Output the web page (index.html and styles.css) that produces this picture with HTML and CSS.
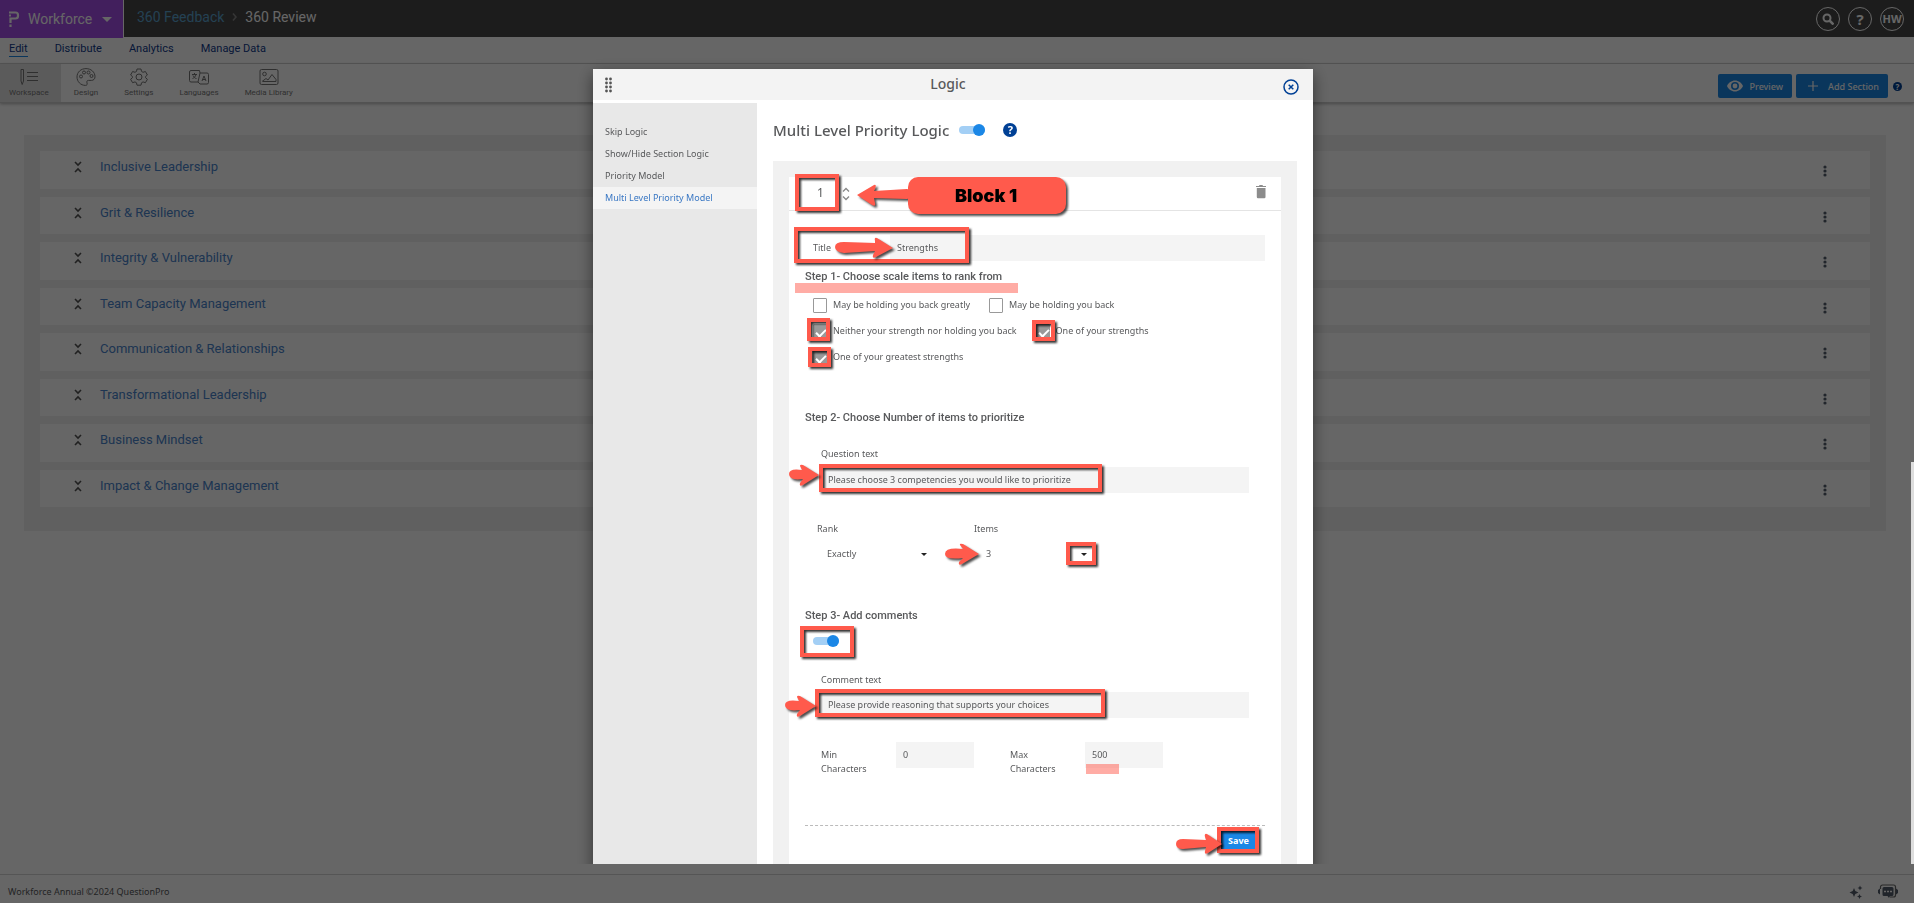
FILE: index.html
```html
<!DOCTYPE html>
<html lang="en">
<head>
  <meta charset="UTF-8">
  <meta name="viewport" content="width=device-width, initial-scale=1.0">
  <title>360 Review</title>
  <link rel="stylesheet" href="styles.css">
</head>
<body>
  <div class="page">
    <header class="topbar">
      <button class="product">
        <svg width="12" height="17" viewBox="0 0 12 17"><path d="M1 1.500h6.500a2.500 2.500 0 0 1 2.500 2.500v1a2.500 2.500 0 0 1-2.500 2.500H2.500V12M2.500 13.500v2.500M1 4.500h2" fill="none" stroke="#fff" stroke-width="2.200"/></svg>
        <span>Workforce</span>
        <span class="caret"></span>
      </button>
      <nav class="crumbs">
        <a href="#">360 Feedback</a>
        <svg width="5" height="8" viewBox="0 0 5 8"><path d="M1 0.500l3 3.500-3 3.500" fill="none" stroke="#888" stroke-width="1.500"/></svg>
        <span>360 Review</span>
      </nav>
      <div class="top-icons">
        <button aria-label="Search"><svg width="12" height="12" viewBox="0 0 12 12"><circle cx="5" cy="5" r="3.500" fill="none" stroke="#fff" stroke-width="2"/><path d="M7.500 7.500l4 4" stroke="#fff" stroke-width="2.500"/></svg></button>
        <button class="mark">?</button>
        <button>HW</button>
      </div>
    </header>

    <nav class="tabs">
      <a class="current" href="#">Edit</a>
      <a href="#">Distribute</a>
      <a href="#">Analytics</a>
      <a href="#">Manage Data</a>
    </nav>

    <div class="toolbar">
      <a class="tool active" href="#">
        <svg width="20" height="18" viewBox="0 0 20 18"><path d="M2 1.500h2.500V13L3.200 16.500 2 13zM8 4.500h11M8 8.500h11M8 12.500h11"/></svg>
        Workspace
      </a>
      <a class="tool" href="#">
        <svg width="20" height="18" viewBox="0 0 20 18"><path d="M10 .6C5 .6 1 4 1 9c0 4.500 3.500 8.400 8.500 8.400 1.500 0 2-1 1.500-2.500s0-2.500 1.500-2.500h3c2 0 3.500-1.500 3.500-3.600C19 4 15 .6 10 .6z"/><circle cx="5" cy="8.500" r="1.500"/><circle cx="8" cy="4.500" r="1.500"/><circle cx="12.500" cy="4.500" r="1.500"/><circle cx="15.500" cy="8" r="1.500"/></svg>
        Design
      </a>
      <a class="tool" href="#">
        <svg width="20" height="18" viewBox="0 0 20 18"><path d="M8 1h4l.5 2.400 1.500.9 2.400-.8 2 3.500-1.900 1.600v1l1.900 1.700-2 3.400-2.400-.8-1.500.9L12 17.200H8l-.5-2.400-1.500-.9-2.400.8-2-3.400 1.900-1.700v-1L1.600 7l2-3.500 2.400.8 1.500-.9z"/><circle cx="10" cy="9" r="3"/></svg>
        Settings
      </a>
      <a class="tool" href="#">
        <svg width="20" height="18" viewBox="0 0 20 18"><path d="M9 14H2a1.500 1.500 0 0 1-1.500-1.500V4A1.500 1.500 0 0 1 2 2.500h8.500L11 5M9 14l2 2h7a1.500 1.500 0 0 0 1.500-1.500V6.500A1.500 1.500 0 0 0 18 5h-7L9 14M3 6.500h5M5.500 5v1.500M7 6.500c-.5 2-2 3.500-3.500 4M4 7.500c.5 1.500 2 3 3.500 3M13 13l2-5 2 5M13.600 11.500h2.800"/></svg>
        Languages
      </a>
      <a class="tool" href="#">
        <svg width="20" height="18" viewBox="0 0 20 18"><rect x="1" y="1.500" width="18" height="15" rx="1.500"/><circle cx="5.500" cy="6" r="1.800"/><path d="M3 13.500l4-3 2 1.500 4-5.500 4 5v2H4"/></svg>
        Media Library
      </a>
      <div class="tool-actions">
        <button class="btn">
          <svg width="16" height="12" viewBox="0 0 16 12"><path fill-rule="evenodd" d="M8 .5C4.500.5 1.500 2.800 0 6c1.500 3.200 4.500 5.500 8 5.500s6.500-2.300 8-5.500C14.500 2.800 11.500.5 8 .5zM8 10a4 4 0 1 1 0-8 4 4 0 0 1 0 8zm0-6.400a2.400 2.400 0 1 0 0 4.800 2.400 2.400 0 0 0 0-4.800z" fill="#fff"/></svg>
          Preview
        </button>
        <button class="btn add">
          <svg width="12" height="12" viewBox="0 0 12 12"><path d="M6 1v10M1 6h10" stroke="#fff" stroke-width="1.200"/></svg>
          Add Section
        </button>
        <button class="help small" aria-label="Help">?</button>
      </div>
    </div>

    <main>
      <ul class="sections" id="sections"></ul>
    </main>

    <footer>
      <span>Workforce Annual ©2024 QuestionPro</span>
      <div class="footer-icons">
        <svg width="14" height="14" viewBox="0 0 14 14"><path d="M5 3l1.300 3L9.500 7.500 6.300 9 5 12 3.700 9 .5 7.500 3.700 6zM11 .5l.8 1.700 1.700.8-1.700.8L11 5.500l-.8-1.700L8.500 3l1.700-.8zM10.500 9l.8 1.700 1.700.8-1.700.8-.8 1.700-.8-1.700-1.700-.8 1.700-.8z"/></svg>
        <svg width="20" height="15" viewBox="0 0 20 15"><path d="M2.500 5V3a2 2 0 0 1 2-2h11a2 2 0 0 1 2 2v8a2 2 0 0 1-2 2H12" fill="none" stroke="#666" stroke-width="1.200"/><path d="M0 6l2-1.500v6L0 9zM20 6l-2-1.500v6L20 9zM6 3h8a1.500 1.500 0 0 1 1.500 1.500v6A1.500 1.500 0 0 1 14 12h-2l-1 2-1.500-2H6a1.500 1.500 0 0 1-1.500-1.500v-6A1.500 1.500 0 0 1 6 3z"/><path d="M6 7.500h2M9 7.500h2M12 7.500h2" stroke="#fff" stroke-width="1.500"/></svg>
      </div>
    </footer>
  </div>

  <div class="backdrop"></div>

  <div class="modal-wrap">
    <div class="modal" role="dialog" aria-label="Logic">
      <div class="modal-head">
        <svg width="8" height="16" viewBox="0 0 8 16" fill="#545454"><circle cx="1.500" cy="2" r="1.400"/><circle cx="5.500" cy="2" r="1.400"/><circle cx="1.500" cy="6" r="1.400"/><circle cx="5.500" cy="6" r="1.400"/><circle cx="1.500" cy="10" r="1.400"/><circle cx="5.500" cy="10" r="1.400"/><circle cx="1.500" cy="14" r="1.400"/><circle cx="5.500" cy="14" r="1.400"/></svg>
        <h2>Logic</h2>
        <button class="close" aria-label="Close">
          <svg width="16" height="16" viewBox="0 0 16 16" fill="none" stroke="#004095"><circle cx="8" cy="8" r="7" stroke-width="1.500"/><path d="M5.700 5.700l4.600 4.600M10.300 5.700l-4.600 4.600" stroke-width="1.500"/></svg>
        </button>
      </div>

      <div class="modal-body">
        <nav class="side">
          <a href="#">Skip Logic</a>
          <a href="#">Show/Hide Section Logic</a>
          <a href="#">Priority Model</a>
          <a class="active" href="#">Multi Level Priority Model</a>
        </nav>

        <div class="content">
          <div class="content-title">
            <h1>Multi Level Priority Logic</h1>
            <input type="checkbox" class="toggle" aria-label="Multi Level Priority Logic" checked>
            <button class="help" aria-label="Help">?</button>
          </div>

          <div class="panel">
            <div class="card">
              <div class="card-head">
                <span class="num">1</span>
                <svg width="8" height="14" viewBox="0 0 8 14" fill="none" stroke="#888" stroke-width="1.300"><path d="M1 4.500l3-3 3 3M1 9.500l3 3 3-3"/></svg>
                <button class="trash" aria-label="Delete">
                  <svg width="10" height="14" viewBox="0 0 10 14" fill="#8c8c8c"><path d="M0 1h3l.5-1h3L7 1h3v1H0zM.8 3h8.700v9a1.200 1.200 0 0 1-1.200 1.200H2A1.200 1.200 0 0 1 .8 12z"/></svg>
                </button>
              </div>

              <form class="card-body">
                <div class="title-row">
                  <label for="title">Title</label>
                  <input type="text" id="title" value="Strengths">
                </div>

                <h3>Step 1- Choose scale items to rank from</h3>
                <div class="scale">
                  <label><input type="checkbox">May be holding you back greatly</label>
                  <label><input type="checkbox">May be holding you back</label>
                  <label><input type="checkbox" checked>Neither your strength nor holding you back</label>
                  <label><input type="checkbox" checked>One of your strengths</label>
                  <label><input type="checkbox" checked>One of your greatest strengths</label>
                </div>

                <h3 class="step">Step 2- Choose Number of items to prioritize</h3>
                <div class="field">
                  <label for="question">Question text</label>
                  <input type="text" id="question" value="Please choose 3 competencies you would like to prioritize">
                </div>
                <div class="selects">
                  <div class="select-field">
                    <label for="rank">Rank</label>
                    <div class="select"><select id="rank"><option>Exactly</option></select></div>
                  </div>
                  <div class="select-field items">
                    <label for="items">Items</label>
                    <div class="select"><select id="items"><option>3</option></select></div>
                  </div>
                </div>

                <h3 class="step">Step 3- Add comments</h3>
                <input type="checkbox" class="toggle comments" aria-label="Add comments" checked>
                <div class="field comment">
                  <label for="comment">Comment text</label>
                  <input type="text" id="comment" value="Please provide reasoning that supports your choices">
                </div>
                <div class="limits">
                  <label for="min">Min Characters</label>
                  <input type="text" id="min" value="0">
                  <label for="max">Max Characters</label>
                  <input type="text" id="max" value="500">
                </div>

                <div class="actions">
                  <button type="button" class="save">Save</button>
                </div>
              </form>
            </div>
          </div>
        </div>
      </div>

      <!-- callouts drawn over the form -->
      <svg class="notes" width="720" height="795" viewBox="0 0 720 795">
        <g class="marker">
          <rect x="202" y="214" width="223" height="10"/>
          <rect x="493" y="695" width="33" height="10"/>
        </g>
        <g class="frames">
          <rect x="204" y="107" width="40" height="33"/>
          <rect x="203" y="160" width="171" height="32"/>
          <rect x="216" y="251" width="19" height="19"/>
          <rect x="441" y="253" width="19" height="17"/>
          <rect x="217" y="280" width="19" height="16"/>
          <rect x="228" y="397" width="279" height="24"/>
          <rect x="475" y="475" width="26" height="19"/>
          <rect x="209" y="559" width="50" height="27"/>
          <rect x="224" y="622" width="286" height="24"/>
          <rect x="626" y="760" width="38" height="22"/>
        </g>
        <g class="shapes">
          <path d="M264 126l17-10q3-1 1 4l-1 2 33-2q5 1 5 5t-5 5l-33-1 1 5q1 4-3 2z"/>
          <rect x="315" y="108" width="158" height="37" rx="10"/>
          <path d="M300 179l-16-10q-3-1-2 3v2l-31-1q-9 0-9 5t9 6l31-2-2 4q-1 4 3 2z"/>
          <path d="M226 406l-16-10q-3-1-3 1l2 4q-13-2-13 4 0 7 14 5l-3 4q-1 4 3 2z"/>
          <path d="M386 485l-16-10q-4-1-3 1l3 4q-18-2-18 5 0 6 18 4l-4 4q-1 4 3 2z"/>
          <path d="M223 637l-16-10q-3-1-3 1l2 4q-14-2-14 4 0 7 15 5l-3 4q-1 4 3 2z"/>
          <path d="M629 775l-15-10q-3-1-2 3l1 3-23-1q-7 0-7 5t7 5l23-2-1 4q-1 4 3 2z"/>
        </g>
        <text x="393" y="133">Block 1</text>
      </svg>
    </div>
    <div class="scroll-thumb"></div>
  </div>

  <script>
    const names = [
      "Inclusive Leadership",
      "Grit &amp; Resilience",
      "Integrity &amp; Vulnerability",
      "Team Capacity Management",
      "Communication &amp; Relationships",
      "Transformational Leadership",
      "Business Mindset",
      "Impact &amp; Change Management"
    ];

    document.getElementById("sections").innerHTML = names.map(name => `
      <li>
        <svg width="8" height="12" viewBox="0 0 8 12" fill="none" stroke="#545454" stroke-width="1.600"><path d="M1 1l3 3 3-3M1 11l3-3 3 3"/></svg>
        <a href="#">${name}</a>
        <button class="more" aria-label="More">
          <svg width="4" height="12" viewBox="0 0 4 12" fill="#545e6b"><circle cx="2" cy="2" r="1.600"/><circle cx="2" cy="6" r="1.600"/><circle cx="2" cy="10" r="1.600"/></svg>
        </button>
      </li>
    `).join("");
  </script>
</body>
</html>
```
FILE: styles.css
```css
* {
  box-sizing: border-box;
}
body {
  margin: 0;
  font-family: "Noto Sans", "Open Sans", sans-serif;
  font-size: 9px;
  color: #58595b;
  background-color: white;
}
a {
  text-decoration: none;
  color: inherit;
}
button {
  font-family: inherit;
  padding: 0;
  border: none;
  background: none;
  cursor: pointer;
}
input, select {
  font-family: inherit;
  font-size: 9px;
  color: #58595b;
  border: none;
  border-radius: 0;
  outline: none;
  margin: 0;
}
h1, h2, h3 {
  margin: 0;
  font-weight: 500;
}
.page {
  min-height: 100vh;
  display: flex;
  flex-direction: column;
}

/* top bar */
.topbar {
  height: 37px;
  display: flex;
  align-items: center;
  background-color: #484848;
  color: white;
}
.product {
  align-self: flex-start;
  width: 124px;
  height: 38px;
  display: flex;
  align-items: center;
  gap: 8px;
  padding-left: 8px;
  background-color: #a54ee8;
  border-right: 1px solid white;
  color: white;
  font-family: Roboto, sans-serif;
  font-size: 14px;
}
.caret {
  margin-left: 2px;
  border: 5px solid transparent;
  border-top-color: white;
  border-bottom: none;
}
.crumbs {
  flex: 1;
  display: flex;
  align-items: center;
  gap: 8px;
  padding: 0 0 3px 13px;
  font-family: Roboto, sans-serif;
  font-size: 14px;
}
.crumbs a {
  color: #5ba3cf;
}
.top-icons {
  display: flex;
  gap: 8px;
  padding-right: 10px;
}
.top-icons button {
  width: 24px;
  height: 24px;
  display: flex;
  align-items: center;
  justify-content: center;
  border: 1px solid white;
  border-radius: 50%;
  color: white;
  font-size: 11px;
  font-weight: bold;
}
.top-icons .mark {
  font-size: 15px;
}

/* tabs and toolbar */
.tabs {
  height: 27px;
  display: flex;
  align-items: flex-start;
  gap: 27px;
  padding: 4px 9px 0;
  border-bottom: 1px solid #d5d5d5;
  font-family: Roboto, sans-serif;
  font-size: 11px;
  line-height: 15px;
  color: #103a8c;
}
.tabs .current {
  border-bottom: 1px solid #1b87e6;
}
.toolbar {
  height: 39px;
  display: flex;
  border-bottom: 1px solid #ccc;
  box-shadow: 0 1px 3px rgba(0, 0, 0, 0.3);
}
.tool {
  display: flex;
  flex-direction: column;
  align-items: center;
  gap: 1px;
  padding: 4px 13px 0;
  font-family: Roboto, sans-serif;
  font-size: 8px;
  line-height: 12px;
  color: #777;
}
.tool svg {
  fill: none;
  stroke: #777;
}
.tool.active {
  padding: 4px 12px 0 9px;
  background-color: #e4e4e4;
}
.tool-actions {
  margin-left: auto;
  display: flex;
  align-items: center;
  gap: 4px;
  padding: 6px 12px 0 0;
}
.btn {
  height: 24px;
  display: flex;
  align-items: center;
  gap: 7px;
  padding: 0 9px;
  border-radius: 2px;
  background-color: #1b87e6;
  color: white;
  font-size: 9px;
  font-weight: 500;
}
.btn.add {
  gap: 9px;
  padding: 0 9px 0 11px;
}
.help {
  width: 14px;
  height: 14px;
  border-radius: 50%;
  background-color: #004095;
  color: white;
  font-size: 11px;
  font-weight: bold;
  line-height: 14px;
}
.help.small {
  width: 9px;
  height: 9px;
  margin-left: 1px;
  font-size: 8px;
  line-height: 9px;
}

/* section list */
main {
  flex: 1;
  padding: 32px 28px 0 24px;
}
.sections {
  display: grid;
  grid-auto-rows: 1fr;
  gap: 8px;
  min-height: 396px;
  margin: 0;
  padding: 16px 16px 24px;
  list-style: none;
  background-color: #f1f1f1;
}
.sections li {
  display: flex;
  align-items: flex-start;
  padding: 7px 43px 0 34px;
  background-color: white;
}
.sections li > svg {
  margin-top: 3px;
}
.sections a {
  margin-left: 18px;
  font-family: Roboto, sans-serif;
  font-size: 13px;
  line-height: 17px;
  color: #4a84cc;
}
.more {
  margin: 5px 0 0 auto;
}
footer {
  height: 29px;
  display: flex;
  justify-content: space-between;
  align-items: center;
  padding: 5px 16px 0 8px;
  border-top: 1px solid #d5d5d5;
}
.footer-icons {
  display: flex;
  align-items: center;
  gap: 15px;
  fill: #545e6b;
}

/* modal */
.backdrop {
  position: fixed;
  inset: 0;
  background-color: rgba(0, 0, 0, 0.6);
}
.modal-wrap {
  position: fixed;
  inset: 0 0 39px;
  overflow: hidden;
  padding: 69px 8px 0 0;
}
.modal {
  position: relative;
  width: 720px;
  min-height: 100%;
  margin: 0 auto;
  display: flex;
  flex-direction: column;
  background-color: white;
  box-shadow: 0 5px 15px rgba(0, 0, 0, 0.5);
}
.modal-head {
  height: 31px;
  display: flex;
  align-items: center;
  justify-content: space-between;
  padding: 0 14px 0 12px;
  background-color: #f3f3f3;
}
.modal-head h2 {
  padding-bottom: 2px;
  font-size: 14px;
}
.close {
  height: 16px;
  margin-top: 4px;
}
.modal-body {
  flex: 1;
  display: flex;
}
.side {
  width: 164px;
  margin-top: 3px;
  padding-top: 18px;
  background-color: #e8e8e8;
}
.side a {
  display: block;
  padding-left: 12px;
  line-height: 22px;
}
.side .active {
  background-color: #f4f4f4;
  color: #3a78c4;
}
.content {
  flex: 1;
  padding: 20px 16px 0;
}
.content-title {
  display: flex;
  align-items: center;
  height: 20px;
}
h1 {
  font-size: 15px;
}
.toggle {
  appearance: none;
  position: relative;
  width: 26px;
  height: 8px;
  border-radius: 4px;
  background-color: #a3cff5;
}
.toggle::before {
  content: "";
  position: absolute;
  top: -2px;
  right: 0;
  width: 12px;
  height: 12px;
  border-radius: 50%;
  background-color: #1b87e6;
}
.content-title .toggle {
  margin: 0 18px 0 10px;
}
.panel {
  margin-top: 21px;
  padding: 16px 16px 0;
  background-color: #f1f1f1;
}
.card {
  background-color: white;
}
.card-head {
  height: 34px;
  display: flex;
  align-items: center;
  padding: 0 15px 0 28px;
  border-bottom: 1px solid #e4e4e4;
}
.num {
  width: 25px;
  padding-bottom: 2px;
  font-size: 12px;
}
.trash {
  margin-left: auto;
}
.card-body {
  padding: 24px 16px 24px;
}
.card-body input[type="text"] {
  height: 26px;
  padding: 0 7px 2px;
  background-color: #f4f4f4;
}
.title-row {
  display: flex;
  align-items: center;
}
.title-row label {
  width: 85px;
  padding: 0 0 2px 8px;
}
.title-row input {
  flex: 1;
}
h3 {
  margin-top: 8px;
  font-family: Roboto, sans-serif;
  font-size: 11px;
  line-height: 16px;
}
.scale {
  display: flex;
  flex-wrap: wrap;
  gap: 10px 19px;
  margin: 12px 0 0 8px;
}
.scale label {
  display: flex;
  align-items: center;
  gap: 6px;
  line-height: 16px;
}
.scale input {
  appearance: none;
  position: relative;
  width: 14px;
  height: 15px;
  border: 1px solid #999;
  border-radius: 1px;
}
.scale input:checked {
  background-color: #999;
}
.scale input:checked::before {
  content: "";
  position: absolute;
  top: 2px;
  left: 4px;
  width: 4px;
  height: 8px;
  border: solid white;
  border-width: 0 2px 2px 0;
  transform: rotate(45deg);
}
.step {
  margin-top: 45px;
}
.field {
  display: flex;
  flex-direction: column;
  gap: 6px;
  margin: 21px 16px 0;
  line-height: 14px;
}
.selects {
  display: flex;
  gap: 41px;
  margin: 29px 0 0 12px;
}
.select-field {
  width: 116px;
  line-height: 14px;
}
.select {
  position: relative;
  margin-top: 9px;
}
.select::after {
  content: "";
  position: absolute;
  top: 8px;
  right: 6px;
  border: 3px solid transparent;
  border-top-color: #222;
  border-bottom: none;
}
.select select {
  appearance: none;
  width: 100%;
  height: 18px;
  padding: 0 10px 1px;
  background: none;
}
.select-field.items {
  width: 119px;
}
.items select {
  padding-left: 12px;
}
.comments {
  display: block;
  margin: 13px 0 0 8px;
}
.comment {
  gap: 5px;
  margin-top: 28px;
}
.limits {
  display: grid;
  grid-template-columns: 75px 114px 75px 78px;
  align-items: start;
  margin: 24px 16px 0;
}
.limits label {
  width: 55px;
  padding-top: 6px;
  line-height: 14px;
}
.limits input {
  width: 78px;
}
.actions {
  display: flex;
  justify-content: flex-end;
  margin-top: 49px;
  padding: 4px 9px 0 0;
  border-top: 1px dashed #bbb;
}
.save {
  width: 35px;
  height: 20px;
  background-color: #1b87e6;
  color: white;
  font-size: 9px;
  font-weight: bold;
}

/* callouts */
.notes {
  position: absolute;
  top: 0;
  left: 0;
  pointer-events: none;
}
.marker {
  fill: #ff5a4c;
  opacity: 0.5;
}
.frames {
  fill: none;
  stroke: #ff5a4c;
  stroke-width: 4px;
  filter: drop-shadow(2px 2px 1px rgba(0, 0, 0, 0.8));
}
.shapes {
  fill: #ff5a4c;
  filter: drop-shadow(2px 2px 1px rgba(0, 0, 0, 0.7));
}
.notes text {
  font-family: Inter, sans-serif;
  font-size: 18px;
  font-weight: 900;
  text-anchor: middle;
}
.scroll-thumb {
  position: absolute;
  right: 0;
  bottom: 0;
  width: 3px;
  height: 402px;
  background-color: #ddd;
}
```
